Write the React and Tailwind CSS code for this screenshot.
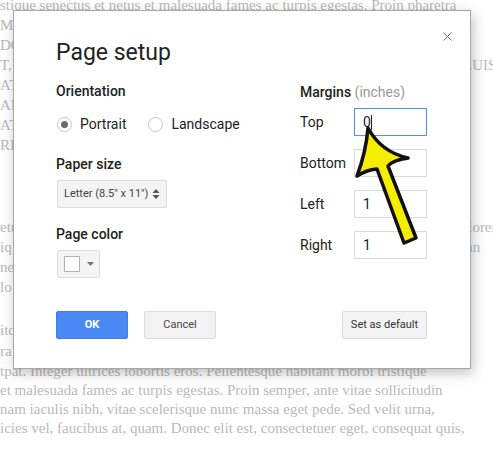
import { X } from "lucide-react";

const TOP_LINES = [
  "stique senectus et netus et malesuada fames ac turpis egestas. Proin pharetra",
  "Mauris et orci. Aenean nec lorem.",
  "DOLOR SIT AMET",
  "T, CONSECTETUER ADIPISCING ELIT, SED DIAM NONUMMY NIBH EUISMOD TINCIDUNT QUI",
  "ATIS ET NETUS",
  "ARE ELEIFEND",
  "AT VOLUTPAT",
  "RE MAGNA",
];

const MID_LINES = [
  "etur adipiscing elit. Morbi commodo, ipsum sed pharetra gravida, orci magna lorem",
  "iq tristique senectus et netus et malesuada fames ac turpis egestas. Proin habitan",
  "ne vitae est.",
  "lo sit amet, consectetuer adipiscing elit. Donec odio. Quisque volutpat mattis",
];

const BOTTOM_LINES = [
  "tpat. Integer ultrices lobortis eros. Pellentesque habitant morbi tristique",
  "et malesuada fames ac turpis egestas. Proin semper, ante vitae sollicitudin",
  "nam iaculis nibh, vitae scelerisque nunc massa eget pede. Sed velit urna,",
  "icies vel, faucibus at, quam. Donec elit est, consectetuer eget, consequat quis,",
];

function Radio({ checked, label }) {
  return (
    <div className="flex items-center gap-[8px]">
      <span className="w-[15px] h-[15px] rounded-full border border-[#c8c8c8] bg-white flex items-center justify-center">
        {checked && <span className="w-[7px] h-[7px] rounded-full bg-[#6a6a6a]" />}
      </span>
      <span>{label}</span>
    </div>
  );
}

function MarginRow({ label, value, focused }) {
  return (
    <div className="flex items-center h-[28px]">
      <span className="w-[54px]">{label}</span>
      <div
        className={`w-[73px] h-[28px] flex items-center pl-[8px] text-[14px] border ${
          focused ? "border-[#4d90fe]" : "border-[#d9d9d9]"
        }`}
      >
        {value}
        {focused && <span className="w-px h-[15px] bg-[#222]" />}
      </div>
    </div>
  );
}

export default function App() {
  return (
    <div className="relative w-[493px] h-[462px] overflow-hidden bg-white">
      {/* document behind the dialog */}
      <div className="font-['Liberation_Serif',serif] text-[15px] text-[#b9b9b9] whitespace-nowrap">
        <div className="mt-[-5px] leading-[20px]">
          {TOP_LINES.map((l, i) => (
            <div key={i}>{l}</div>
          ))}
        </div>
        <div className="mt-[62px] leading-[20px]">
          {MID_LINES.map((l, i) => (
            <div key={i}>{l}</div>
          ))}
        </div>
        <div className="mt-[23px] leading-[21px]">
          <div>itc lacinia egestas augue. Vestibulum eu lorem non nisi ultrices augue</div>
          <div>ra ut eros.</div>
        </div>
        <div className="leading-[19px]">
          {BOTTOM_LINES.map((l, i) => (
            <div key={i}>{l}</div>
          ))}
        </div>
      </div>

      {/* dialog */}
      <div className="absolute left-[13px] top-[10px] w-[458px] h-[359px] bg-white border border-[#a8a8a8] shadow-[2px_4px_12px_rgba(0,0,0,0.25)] font-['Roboto',sans-serif] text-[14px] text-[#222] pt-[28px] pl-[42px] pr-[43px]">
        <X className="absolute right-[15px] top-[18px] w-[15px] h-[15px] text-[#6f6f6f]" strokeWidth={1.6} />
        <div className="text-[23px] leading-[27px]">Page setup</div>

        <div className="flex mt-[15px]">
          <div className="w-[245px] flex flex-col">
            <div className="font-medium leading-[20px]">Orientation</div>
            <div className="flex gap-[22px] mt-[13px] leading-[20px] ml-[1px]">
              <Radio checked label="Portrait" />
              <Radio label="Landscape" />
            </div>
            <div className="font-medium leading-[20px] mt-[20px]">Paper size</div>
            <div className="mt-[6px] w-[110px] h-[28px] ml-[1px] flex items-center justify-between pl-[6px] pr-[6px] bg-[#f4f4f4] border border-[#dcdcdc] rounded-[2px] text-[11px] text-[#444]">
              <span>Letter (8.5" x 11")</span>
              <svg width="8" height="12" viewBox="0 0 8 12">
                <path d="M4 1 L7.5 5 H0.5 Z M4 11 L7.5 7 H0.5 Z" fill="#555" />
              </svg>
            </div>
            <div className="font-medium leading-[20px] mt-[16px]">Page color</div>
            <div className="mt-[6px] w-[43px] h-[28px] ml-[1px] flex items-center gap-[7px] pl-[6px] bg-[#f4f4f4] border border-[#dcdcdc] rounded-[2px]">
              <span className="w-[16px] h-[16px] bg-white border border-[#b5b5b5]" />
              <svg width="7" height="4" viewBox="0 0 7 4">
                <path d="M0 0 H7 L3.5 4 Z" fill="#777" />
              </svg>
            </div>
          </div>

          <div className="flex flex-col">
            <div className="leading-[20px] mt-[1px]">
              <span className="font-medium">Margins</span>{" "}
              <span className="text-[#9a9a9a]">(inches)</span>
            </div>
            <div className="flex flex-col gap-[13px] mt-[6px]">
              <MarginRow label="Top" value="0" focused />
              <MarginRow label="Bottom" value="1" />
              <MarginRow label="Left" value="1" />
              <MarginRow label="Right" value="1" />
            </div>
          </div>
        </div>

        <div className="flex items-center mt-[33px] text-[11px]">
          <button className="w-[72px] h-[28px] rounded-[2px] bg-[#4a89f3] border border-[#3f7fe8] text-white font-bold">
            OK
          </button>
          <button className="ml-[16px] w-[72px] h-[28px] rounded-[2px] bg-[#f3f3f3] border border-[#dcdcdc] text-[#444]">
            Cancel
          </button>
          <button className="ml-auto w-[85px] h-[28px] rounded-[2px] bg-[#f3f3f3] border border-[#dcdcdc] text-[#333]">
            Set as default
          </button>
        </div>
      </div>

      {/* yellow annotation arrow */}
      <svg className="absolute left-0 top-0 pointer-events-none" width="493" height="462" viewBox="0 0 493 462">
        <path
          d="M368 128 Q381 152 408 158 Q393 160 388 166 L416 238 L404 243 L377 169 Q366 170 357 176 Q366 152 368 128 Z"
          fill="#f6ee00"
          stroke="#111"
          strokeWidth="3.5"
          strokeLinejoin="round"
        />
      </svg>
    </div>
  );
}
